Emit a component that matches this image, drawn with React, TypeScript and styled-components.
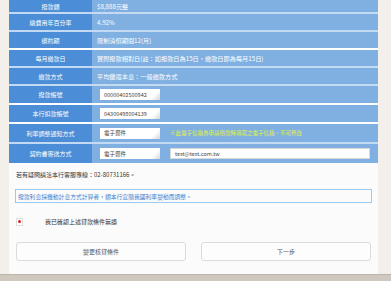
import React from "react";
import styled, { createGlobalStyle } from "styled-components";

interface InfoRow {
    label: string;
    height: number;
    sep: string;
    value?: string;
    account?: string;
    select?: string;
    note?: string;
    email?: string;
}

const rows: InfoRow[] = [
    { label: "撥款額", height: 12, sep: "transparent", value: "$8,888元整" },
    { label: "總費用年百分率", height: 16, sep: "#c4daf2", value: "4.92%" },
    { label: "綁約期", height: 16, sep: "#c4daf2", value: "限制清償期間12(月)" },
    {
        label: "每月繳款日",
        height: 16,
        sep: "#ffffff",
        value: "實際撥款相對日(註：如撥款日為15日，繳款日即為每月15日)",
    },
    { label: "繳款方式", height: 16, sep: "#c4daf2", value: "平均攤還本息：一般繳款方式" },
    { label: "撥款帳號", height: 17, sep: "#c4daf2", account: "00000402500942" },
    { label: "本行扣款帳號", height: 17, sep: "#ffffff", account: "04300498004139" },
    {
        label: "利率調整通知方式",
        height: 18,
        sep: "#ffffff",
        select: "電子郵件",
        note: "※此電子信箱為申請借款時填寫之電子信箱，不可修改",
    },
    {
        label: "契約書寄送方式",
        height: 19,
        sep: "#c4daf2",
        select: "電子郵件",
        email: "test@test.com.tw",
    },
];

const App: React.FC = () => {
    return (
        <>
            <GlobalStyle />
            <Page>
                <Panel>
                    <Table>
                        {rows.map((row, i) => (
                            <Row key={i} $height={row.height} $sep={row.sep}>
                                <Label>{row.label}</Label>
                                <Value>
                                    {row.value && <span>{row.value}</span>}
                                    {row.account && <Field $width={60}>{row.account}</Field>}
                                    {row.select && <Field $width={60}>{row.select}</Field>}
                                    {row.note && <Note>{row.note}</Note>}
                                    {row.email && (
                                        <Field $width={200} $plain>
                                            {row.email}
                                        </Field>
                                    )}
                                </Value>
                            </Row>
                        ))}
                    </Table>
                    <Contact>若有疑問請洽本行客服專線：02-80731166。</Contact>
                    <Notice>撥款利息採機動計息方式計算者，額本行宣隨我國利率變動而調整。</Notice>
                    <Confirm>
                        <CheckBox>
                            <Dot />
                        </CheckBox>
                        <span>我已確認上述貸款條件無誤</span>
                    </Confirm>
                    <Buttons>
                        <Button>變更核貸條件</Button>
                        <Button>下一步</Button>
                    </Buttons>
                </Panel>
                <Side />
            </Page>
            <Footer />
        </>
    );
};

export default App;

const GlobalStyle = createGlobalStyle`
    html, body {
        margin: 0;
        padding: 0;
        background: #f3f0eb;
        font-family: "Noto Sans CJK TC", "Liberation Sans", sans-serif;
    }
`;

const Page = styled.div`
    display: flex;
    height: 274px;
    padding-left: 9px;
    overflow: hidden;
`;

const Panel = styled.div`
    width: 369px;
    background: #fbfbfb;
    display: flex;
    flex-direction: column;
`;

const Side = styled.div`
    flex: 1;
    background: #f3f0eb;
`;

const Table = styled.div`
    display: flex;
    flex-direction: column;
`;

const Row = styled.div<{ $height: number; $sep: string }>`
    display: flex;
    height: ${(p) => p.$height}px;
    border-top: ${(p) => (p.$sep === "transparent" ? "0" : `2px solid ${p.$sep}`)};
    background: #80b0e1;
`;

const Label = styled.div`
    width: 83px;
    background: #4b8dd6;
    color: #ffffff;
    font-size: 6px;
    display: flex;
    align-items: center;
    justify-content: center;
`;

const Value = styled.div`
    flex: 1;
    display: flex;
    align-items: center;
    gap: 10px;
    padding-left: 5px;
    color: #ffffff;
    font-size: 6.2px;
`;

const Field = styled.div<{ $width: number; $plain?: boolean }>`
    box-sizing: border-box;
    width: ${(p) => p.$width}px;
    height: 11px;
    margin-left: 3px;
    padding-left: 4px;
    display: flex;
    align-items: center;
    background: ${(p) =>
        p.$plain ? "#ffffff" : "linear-gradient(135deg, #ffffff 85%, #d6d6d6 100%)"};
    border: ${(p) => (p.$plain ? "1px solid #d8d8d8" : "0")};
    color: #444;
    font-size: 5.5px;
    & + & {
        margin-left: 0;
    }
`;

const Note = styled.span`
    color: #e6f23c;
    font-size: 5.5px;
`;

const Contact = styled.div`
    margin: 7px 0 0 7px;
    font-size: 6px;
    color: #333;
`;

const Notice = styled.div`
    box-sizing: border-box;
    margin: 10px 0 0 6px;
    width: 357px;
    height: 14px;
    padding-left: 2px;
    display: flex;
    align-items: center;
    border: 1px solid #9ccaf3;
    color: #3b7fd2;
    font-size: 5.8px;
`;

const Confirm = styled.div`
    display: flex;
    align-items: center;
    margin: 14px 0 0 7px;
    font-size: 6px;
    color: #333;
    & > span {
        margin-left: 22px;
    }
`;

const CheckBox = styled.div`
    width: 7px;
    height: 8px;
    box-sizing: border-box;
    border: 1px solid #ddd;
    background: #fff;
    display: flex;
    align-items: center;
    justify-content: center;
`;

const Dot = styled.div`
    width: 3px;
    height: 3px;
    border-radius: 50%;
    background: #e02020;
`;

const Buttons = styled.div`
    display: flex;
    gap: 15px;
    margin: 16px 0 0 7px;
`;

const Button = styled.button`
    box-sizing: border-box;
    width: 170px;
    height: 19px;
    border: 1px solid #dcdcdc;
    border-radius: 3px;
    background: #fdfdfd;
    color: #555;
    font-family: inherit;
    font-size: 6px;
    padding: 0;
`;

const Footer = styled.div`
    height: 7px;
    background: #cfc8bf;
    border-top: 1px solid #bdb5aa;
`;
